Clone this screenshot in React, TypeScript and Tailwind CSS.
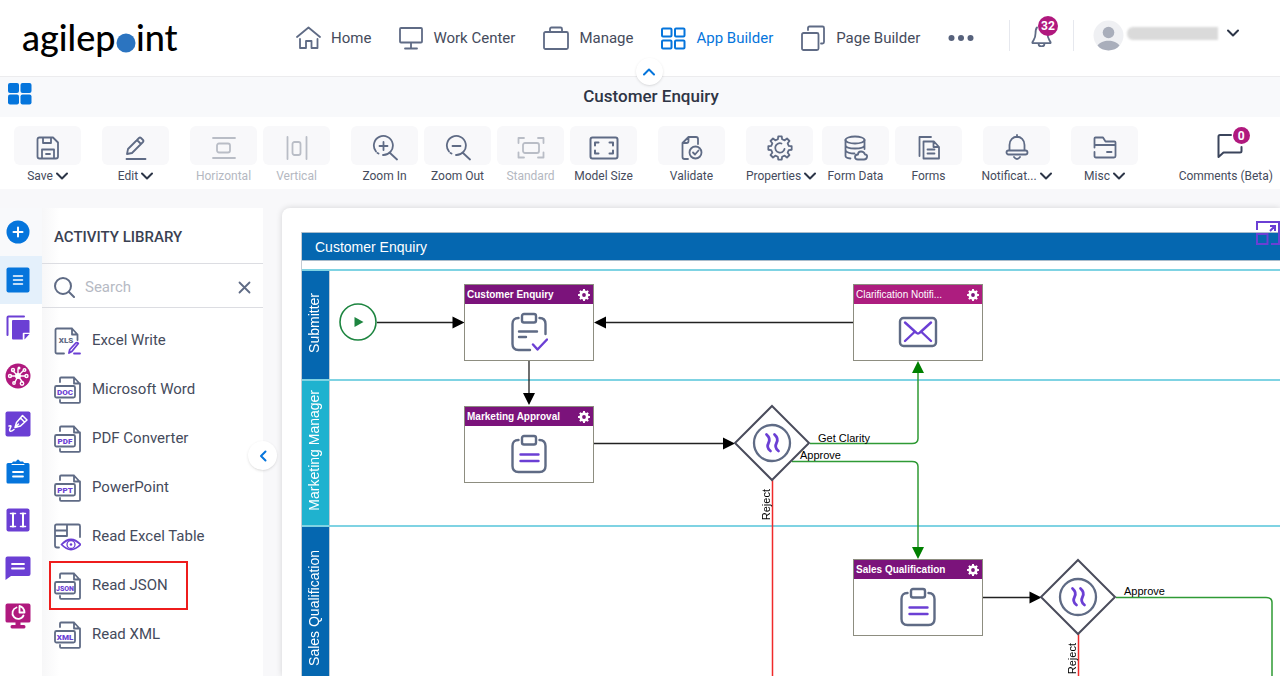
import { useState } from 'react';
import type { ReactNode } from 'react';
import clsx from 'clsx';

const SLATE = '#5f6b85';
const BLUE = '#0575dc';
const PURPLE = '#6b3fd4';

// scalloped outline of a cog, centred on (c, c)
function gearPath(teeth: number, outer: number, inner: number, c: number) {
    const step = (Math.PI * 2) / teeth;
    const pts: string[] = [];
    for (let i = 0; i < teeth; i++) {
        const a = i * step - Math.PI / 2;
        [
            [-0.3, inner],
            [-0.19, outer],
            [0.19, outer],
            [0.3, inner],
        ].forEach(([o, r]) => {
            const t = a + o * step;
            pts.push(`${(c + r * Math.cos(t)).toFixed(2)} ${(c + r * Math.sin(t)).toFixed(2)}`);
        });
    }
    return `M${pts.join('L')}Z`;
}

type IconProps = { w: number; h: number; color?: string; sw?: number; className?: string; children: ReactNode };

function Icon({ w, h, color = SLATE, sw = 2, className, children }: IconProps) {
    return (
        <svg
            width={w}
            height={h}
            viewBox={`0 0 ${w} ${h}`}
            fill="none"
            stroke={color}
            strokeWidth={sw}
            strokeLinecap="round"
            strokeLinejoin="round"
            className={clsx('shrink-0', className)}
            aria-hidden="true"
        >
            {children}
        </svg>
    );
}

function Chevron({ className }: { className?: string }) {
    return (
        <Icon w={12} h={8} color="#2c3547" className={className}>
            <path d="M1 1.500 6 6.500l5-5" />
        </Icon>
    );
}

const NAV = [
    {
        label: 'Home',
        icon: (
            <Icon w={25} h={24} sw={1.8}>
                <path d="M1 11 12.500 1.500 24 11M4 13v9h6v-7h5.500v7H21.500v-9" />
            </Icon>
        ),
    },
    {
        label: 'Work Center',
        icon: (
            <Icon w={24} h={24} sw={1.8}>
                <rect x="1" y="2" width="22" height="14.500" rx="1" />
                <path d="M12 17v5M6 22.500h12" />
            </Icon>
        ),
    },
    {
        label: 'Manage',
        icon: (
            <Icon w={26} h={24} sw={1.8}>
                <rect x="1" y="6" width="24" height="17" rx="1.500" />
                <path d="M7 5.500V3q0-1.500 1.500-1.500h9Q19 1.500 19 3v2.500" />
            </Icon>
        ),
    },
    {
        label: 'App Builder',
        active: true,
        icon: (
            <Icon w={25} h={24} color={BLUE} sw={2}>
                <rect x="1" y="2.500" width="9.500" height="8" rx="1" />
                <rect x="14" y="2.500" width="9.500" height="8" rx="1" />
                <rect x="1" y="14.500" width="9.500" height="8" rx="1" />
                <rect x="14" y="14.500" width="9.500" height="8" rx="1" />
            </Icon>
        ),
    },
    {
        label: 'Page Builder',
        icon: (
            <Icon w={25} h={26} sw={1.8}>
                <rect x="1" y="8" width="16.500" height="17" rx="1.500" />
                <path d="M7 5V3q0-1.500 1.500-1.500h13Q23 1.500 23 3v14q0 1.500-1.500 1.500H20" />
            </Icon>
        ),
    },
];

function Header() {
    return (
        <header className="flex h-[77px] shrink-0 items-center border-b border-[#ececee] bg-white pr-10">
            <a href="#" aria-label="agilepoint" className="w-[296px] shrink-0 pb-[2px] pl-[22px] font-[Lato,sans-serif] text-[36px] leading-10 font-medium text-black">
                agilep
                <span className="relative text-transparent">
                    o
                    <svg viewBox="0 0 20 20" className="absolute bottom-[6px] left-px size-5" aria-hidden="true">
                        <circle cx="10" cy="10" r="9.500" fill="#2b74c0" />
                    </svg>
                </span>
                int
            </a>
            <nav className="flex items-center gap-7">
                {NAV.map((n) => (
                    <a
                        key={n.label}
                        href="#"
                        className={clsx(
                            'flex items-center gap-[10px] text-[15px] whitespace-nowrap',
                            n.active ? 'text-[#0575dc]' : 'text-[#454b5c]',
                        )}
                    >
                        {n.icon}
                        {n.label}
                    </a>
                ))}
                <button aria-label="More">
                    <svg width="26" height="8" viewBox="0 0 26 8" fill="#57627c" aria-hidden="true">
                        <circle cx="3.500" cy="4" r="3" />
                        <circle cx="13" cy="4" r="3" />
                        <circle cx="22.500" cy="4" r="3" />
                    </svg>
                </button>
            </nav>
            <div className="ml-auto flex items-center pb-[5px]">
                <button aria-label="Notifications" className="relative border-x border-[#e6e8ee] px-[21px] py-1">
                    <Icon w={21} h={23} sw={1.8}>
                        <path d="M6 3.500C4.500 5 4.500 7 4.500 9.500 4.500 14 3.500 14.500 1.500 18q-.5 1.200.8 1.200h16.400q1.300 0 .8-1.200c-2-3.500-3-4-3-8.500M7.500 19.500c0 4 6 4 6 0" />
                    </Icon>
                    <span className="absolute -top-1 left-7 flex size-5 items-center justify-center rounded-full bg-[#b0197e] text-xs font-bold text-white">
                        32
                    </span>
                </button>
                <button aria-label="Account" className="flex items-center pl-[19px]">
                    <svg width="31" height="31" viewBox="0 0 31 31" aria-hidden="true">
                        <circle cx="15.500" cy="15.500" r="15" fill="#eff0f3" />
                        <circle cx="15.500" cy="12.500" r="5.800" fill="#a9aebb" />
                        <path d="M4.500 25.500c4-6.500 18-6.500 22 0-5 6.500-17 6.500-22 0Z" fill="#a9aebb" />
                    </svg>
                    <span className="mb-1 ml-[3px] h-[13px] w-[91px] rounded-l-md bg-[#dadada] blur-[1px]" />
                    <Icon w={14} h={9} color="#2c3547" className="mb-1 ml-2">
                        <path d="M2 1.500 7 6.500l5-5" />
                    </Icon>
                </button>
            </div>
        </header>
    );
}

function TitleBar() {
    return (
        <div className="relative flex h-10 shrink-0 items-center justify-center bg-[#f8f9fb] pl-[22px]">
            <button aria-label="Dashboard" className="absolute top-[6px] left-2">
                <svg width="24" height="22" viewBox="0 0 24 22" fill={BLUE} aria-hidden="true">
                    <rect width="11" height="10" rx="2" />
                    <rect x="12.500" width="11" height="10" rx="2" />
                    <rect y="11.500" width="11" height="10" rx="2" />
                    <rect x="12.500" y="11.500" width="11" height="10" rx="2" />
                </svg>
            </button>
            <h1 className="text-[17px] font-medium text-[#2f3545]">Customer Enquiry</h1>
            <div className="absolute inset-x-0 -top-[19px] flex justify-center pl-[18px]">
                <button aria-label="Collapse header" className="flex size-[27px] items-center justify-center rounded-full bg-white shadow">
                    <Icon w={12} h={8} color={BLUE}>
                        <path d="M1 6.500 6 1.500l5 5" />
                    </Icon>
                </button>
            </div>
        </div>
    );
}

type Tool = { label: string; menu?: boolean; disabled?: boolean; wide?: boolean; icon: ReactNode };

const MUTED = '#b9bdc6';

const TOOLS: Tool[][] = [
    [
        {
            label: 'Save',
            menu: true,
            icon: (
                <Icon w={24} h={24} sw={1.8}>
                    <path d="M1.500 3.500q0-2 2-2H17l5 5V20.500q0 2-2 2H3.500q-2 0-2-2ZM7 1.500v5.500h8V1.500M6 22V13.500h12V22M10 18h4" />
                </Icon>
            ),
        },
    ],
    [
        {
            label: 'Edit',
            menu: true,
            icon: (
                <Icon w={24} h={24} sw={1.8}>
                    <path d="M2.500 23h19M3 18l1-5L15 2q1-1 2 0l2 2q1 1 0 2L8 17ZM13 4l4 4" />
                </Icon>
            ),
        },
    ],
    [
        {
            label: 'Horizontal',
            disabled: true,
            icon: (
                <Icon w={24} h={24} color={MUTED} sw={1.8}>
                    <path d="M1 2h22M1 22h22" />
                    <rect x="5" y="7.500" width="13" height="9" rx="2" />
                </Icon>
            ),
        },
        {
            label: 'Vertical',
            disabled: true,
            icon: (
                <Icon w={22} h={24} color={MUTED} sw={1.8}>
                    <path d="M1.500 1v22M20.500 1v22" />
                    <rect x="6.500" y="6" width="8" height="13" rx="2" />
                </Icon>
            ),
        },
    ],
    [
        {
            label: 'Zoom In',
            icon: (
                <Icon w={26} h={26} sw={1.8}>
                    <path d="M4 16.500a9.500 9.500 0 1 1 7 3.500M18 18l7 6.500M11.500 7v8M7.500 11h8M5.500 18l1 .5" />
                </Icon>
            ),
        },
        {
            label: 'Zoom Out',
            icon: (
                <Icon w={26} h={26} sw={1.8}>
                    <path d="M4 16.500a9.500 9.500 0 1 1 7 3.500M18 18l7 6.500M7.500 11h8M5.500 18l1 .5" />
                </Icon>
            ),
        },
        {
            label: 'Standard',
            disabled: true,
            icon: (
                <Icon w={28} h={24} color={MUTED} sw={1.8}>
                    <path d="M1.500 7V2H7M21 2h5.500v5M1.500 16.500v5H7M21 21.500h5.500v-5" />
                    <rect x="6" y="7" width="16" height="10" rx="2" />
                </Icon>
            ),
        },
        {
            label: 'Model Size',
            icon: (
                <Icon w={30} h={24} sw={2}>
                    <rect x="1.500" y="1.500" width="27" height="21" rx="2" />
                    <path d="M6 9.500V6.500h3.500M20.500 6.500H24v3M6 14.500v3h3.500M20.500 17.500H24v-3" />
                </Icon>
            ),
        },
    ],
    [
        {
            label: 'Validate',
            icon: (
                <Icon w={22} h={26} sw={1.8}>
                    <path d="M7 24H3.500Q1.500 24 1.500 22V8l6-6H15q2 0 2 2v5M1.500 8H5.500q2 0 2-2V2" />
                    <circle cx="14.500" cy="17.500" r="6" />
                    <path d="m12 17.500 2 2 3.500-4" />
                </Icon>
            ),
        },
    ],
    [
        {
            label: 'Properties',
            menu: true,
            wide: true,
            icon: (
                <Icon w={26} h={26} sw={1.8}>
                    <path d={gearPath(8, 11.8, 9, 13)} />
                    <path d="M17.500 14a4.700 4.700 0 1 1-3-5.500" />
                </Icon>
            ),
        },
        {
            label: 'Form Data',
            icon: (
                <Icon w={24} h={26} sw={1.8}>
                    <ellipse cx="11" cy="5" rx="9.500" ry="3.500" />
                    <path d="M1.500 5v16q0 2 5 2.500M20.500 5v9M1.500 10.500c1 4 18 4 19 0M1.500 15.500q2 3 9 3" />
                    <path d="M14 24.500q-3 0-3-2.500t3-2.500q0-3 3-3t4 3q2.500 0 2 2.500t-3 2.500Z" />
                </Icon>
            ),
        },
        {
            label: 'Forms',
            icon: (
                <Icon w={22} h={25} sw={1.8}>
                    <path d="M1.500 21V2H13M5.500 6.500H16l5 5.500v11.500H5.500ZM15.500 6.500V12H21M9.500 14.500h7M9.500 18.500h7" />
                </Icon>
            ),
        },
    ],
    [
        {
            label: 'Notificat...',
            menu: true,
            icon: (
                <Icon w={24} h={27} sw={1.8}>
                    <path d="M12 1v2M4.500 16V11C4.500 0 19.500 0 19.500 11v5M9 23q3 4 6 0" />
                    <rect x="1.500" y="16.500" width="21" height="4" rx="2" />
                </Icon>
            ),
        },
    ],
    [
        {
            label: 'Misc',
            menu: true,
            icon: (
                <Icon w={24} h={23} sw={1.8}>
                    <path d="M1.500 11.500V2.500Q1.500 1.500 2.500 1.500H10l2.500 4H21.500q1 0 1 1V20q0 1.500-1.500 1.500H3Q1.500 21.500 1.500 20v-4M1.500 9h21M14 16h4.500" />
                </Icon>
            ),
        },
    ],
];

function Toolbar() {
    return (
        <div className="flex h-[72px] shrink-0 items-start bg-white pt-[9px] pr-[7px] pl-[14px]">
            <div className="flex gap-[21px]">
                {TOOLS.map((group, i) => (
                    <div key={i} className="flex gap-[6px]">
                        {group.map((t) => (
                            <button
                                key={t.label}
                                disabled={t.disabled}
                                className={clsx(
                                    'flex flex-col text-xs whitespace-nowrap',
                                    t.wide ? 'w-[70px]' : 'w-[67px]',
                                    t.disabled ? 'text-[#b4b8c1]' : 'text-[#454b5c]',
                                )}
                            >
                                <span className="flex h-[39px] w-[67px] items-center justify-center rounded-md bg-[#f8f8fa] pt-1">{t.icon}</span>
                                <span className="flex h-[22px] items-center justify-center gap-[3px] self-center">
                                    {t.label}
                                    {t.menu && <Chevron />}
                                </span>
                            </button>
                        ))}
                    </div>
                ))}
            </div>
            <button className="ml-auto flex flex-col items-center text-xs whitespace-nowrap text-[#454b5c]">
                <span className="relative flex h-[39px] w-12 items-center justify-center pl-2">
                    <Icon w={26} h={26} color="#3b455c">
                        <path d="M14 2H3Q1.500 2 1.500 3.500V24l5-4.500H23q1.500 0 1.500-1.500v-4" />
                    </Icon>
                    <span className="absolute top-px right-0 flex size-[17px] items-center justify-center rounded-full bg-[#b0197e] font-bold text-white">
                        0
                    </span>
                </span>
                <span className="flex h-[22px] items-center">Comments (Beta)</span>
            </button>
        </div>
    );
}

const RAIL = [
    {
        label: 'Add',
        icon: (
            <Icon w={24} h={24} color="#fff">
                <circle cx="12" cy="12" r="11.500" fill={BLUE} stroke="none" />
                <path d="M12 7.500v9M7.500 12h9" />
            </Icon>
        ),
    },
    {
        label: 'Activity Library',
        icon: (
            <Icon w={24} h={26} color="#fff" sw={1.5}>
                <rect x="0.500" y="0.500" width="23" height="25" rx="2" fill={BLUE} stroke="none" />
                <path d="M7.500 9h9M7.500 13h9M7.500 17h9" />
            </Icon>
        ),
    },
    {
        label: 'Pages',
        icon: (
            <Icon w={24} h={26} color={PURPLE}>
                <path d="M1.500 20V2.500q0-1 1-1H18" />
                <path d="M6 6q0-1 1-1h15.500q1 0 1 1v12L17 24.500H7q-1 0-1-1Z" fill={PURPLE} stroke="none" />
                <path d="M17.500 24.500v-6h6" fill="#fff" stroke="#fff" strokeWidth="1.500" />
                <path d="m18.500 24.500 5-5.500h-5Z" fill={PURPLE} stroke="none" />
            </Icon>
        ),
    },
    {
        label: 'Connectors',
        icon: (
            <Icon w={26} h={26} color="#fff" sw={1.4}>
                <circle cx="13" cy="13" r="12.500" fill="#b0197e" stroke="none" />
                <path d="M13 13V6M13 13l5-5M13 13h7M13 13l4.500 6M13 13l-3 6M13 13H6M13 13 8 8" />
                <circle cx="13" cy="13" r="3" fill="#fff" stroke="none" />
                <circle cx="14" cy="5" r="1.500" fill="#fff" stroke="none" />
                <circle cx="19.500" cy="7" r="1.300" />
                <circle cx="21.500" cy="13" r="1.500" />
                <circle cx="17" cy="20.500" r="1.700" />
                <circle cx="9" cy="20" r="1.200" />
                <circle cx="5" cy="13" r="1.500" />
                <circle cx="8" cy="7" r="1.500" />
            </Icon>
        ),
    },
    {
        label: 'Signature',
        icon: (
            <Icon w={26} h={26} color="#fff" sw={1.5}>
                <rect x="0.500" y="0.500" width="25" height="25" rx="2" fill={PURPLE} stroke="none" />
                <path d="m10 16.500 1.500-5L17.500 4.500l4.500 4.500-6.500 6ZM15.500 7l4 4M10 16.500l3.500-3.500M4 15q3-1 1.500 1.500T5 20t4-1.500" />
            </Icon>
        ),
    },
    {
        label: 'Tasks',
        icon: (
            <Icon w={24} h={26} color="#fff" sw={1.8}>
                <path d="M2 4h4l1-1.500h3q2-4 4 0h3L18 4h4q1.500 0 1.500 1.500V23q0 1.500-1.500 1.500H2Q.5 24.500.5 23V5.500Q.5 4 2 4Z" fill={BLUE} stroke="none" />
                <path d="M6 5.500h12" strokeWidth="1" />
                <path d="M7 13h10M7 17.500h10" />
            </Icon>
        ),
    },
    {
        label: 'Data',
        icon: (
            <Icon w={24} h={24} color="#fff">
                <rect x="0.500" y="0.500" width="23" height="23" rx="2" fill={PURPLE} stroke="none" />
                <path d="M7 5.500v13M17 5.500v13" />
                <path d="M4.500 5.500h5M4.500 18.500h5M14.500 5.500h5M14.500 18.500h5" strokeWidth="1.500" />
            </Icon>
        ),
    },
    {
        label: 'Messages',
        icon: (
            <Icon w={26} h={26} color="#fff" sw={1.8}>
                <path d="M2.500 1.500h21q2 0 2 2V19q0 2-2 2H6l-5.500 4V3.500q0-2 2-2Z" fill={PURPLE} stroke="none" />
                <path d="M7 9h12M7 13.500h12" />
            </Icon>
        ),
    },
    {
        label: 'Reports',
        icon: (
            <Icon w={26} h={26} color="#fff" sw={1.8}>
                <path d="M2.500.5h21q2 0 2 2V18q0 1.500-2 1.500h-8V22H19q1.500 0 1.500 1.800t-1.500 1.700H7q-1.500 0-1.500-1.700T7 22h3.500v-2.500h-8Q.5 19.500.5 18V2.500q0-2 2-2Z" fill="#b0197e" stroke="none" />
                <path d="M11.500 4.500a5.800 5.800 0 1 0 7 8M14.500 3v6.500h5Q19 4 14.500 3Z" />
            </Icon>
        ),
    },
];

function Rail() {
    const [active, setActive] = useState(1);
    return (
        <nav className="flex w-[42px] shrink-0 flex-col bg-white">
            {RAIL.map((r, i) => (
                <button
                    key={r.label}
                    aria-label={r.label}
                    onClick={() => setActive(i)}
                    className={clsx(
                        'flex h-12 shrink-0 items-center justify-center pr-[6px]',
                        i === active ? 'bg-[#e4f0fb]' : i === 0 ? 'bg-[#f8f9fb]' : 'bg-white',
                    )}
                >
                    {r.icon}
                </button>
            ))}
        </nav>
    );
}

function FileIcon({ tag }: { tag: string }) {
    return (
        <Icon w={27} h={28} sw={1.8}>
            <path d="M6 6V2.500q0-1 1-1H20l6 6.500V26q0 .8-1 .8H7q-1 0-1-1V24M20 1.500V7.500h6" />
            <rect x="1" y="10" width="20" height="11.500" rx="1.500" fill="#fff" />
            <text
                x="11"
                y="18.500"
                textAnchor="middle"
                fill={PURPLE}
                stroke="none"
                className={clsx('font-[Roboto,sans-serif] font-black', tag.length > 3 ? 'text-[7px]' : 'text-[8px]')}
            >
                {tag}
            </text>
        </Icon>
    );
}

const ACTIVITIES = [
    {
        label: 'Excel Write',
        icon: (
            <Icon w={27} h={28} sw={1.8}>
                <path d="M10 26.500H3q-1.500 0-1.500-1.500V3Q1.500 1.500 3 1.500H18l5.500 6V13M18 1.500V7.500h5.500" />
                <text x="12" y="15.500" textAnchor="middle" fill={SLATE} stroke="none" className="font-[Roboto,sans-serif] text-[8px] font-black">
                    XLS
                </text>
                <path d="M20 26.500h6M15 26l.8-3.500 6-6.500q1.500-1 2.500.5l-6.500 8Z" stroke={PURPLE} />
            </Icon>
        ),
    },
    { label: 'Microsoft Word', icon: <FileIcon tag="DOC" /> },
    { label: 'PDF Converter', icon: <FileIcon tag="PDF" /> },
    { label: 'PowerPoint', icon: <FileIcon tag="PPT" /> },
    {
        label: 'Read Excel Table',
        icon: (
            <Icon w={27} h={28} sw={1.8}>
                <path d="M5 24.500H3q-2 0-2-2V3Q1 1.500 2.500 1.500H24.500Q26 1.500 26 3V14M1 7.500h12M1 13h12M13 1.500V13" />
                <path d="M7.500 21.500q9.500-10 19 0-9.500 10-19 0Z" stroke={PURPLE} />
                <circle cx="17" cy="21.500" r="4" stroke={PURPLE} strokeWidth="1.300" />
                <circle cx="17" cy="21.500" r="1.300" fill={PURPLE} stroke="none" />
            </Icon>
        ),
    },
    { label: 'Read JSON', icon: <FileIcon tag="JSON" />, marked: true },
    { label: 'Read XML', icon: <FileIcon tag="XML" /> },
];

function Library() {
    const [query, setQuery] = useState('');
    const items = ACTIVITIES.filter((a) => a.label.toLowerCase().includes(query.toLowerCase()));

    return (
        <aside className="relative flex w-[221px] shrink-0 flex-col bg-white bg-linear-to-r from-[#f7f7f8] to-white to-8%">
            <h2 className="flex h-14 shrink-0 items-center border-b border-[#dcdde2] pt-[3px] pl-3 text-[15px] font-medium text-[#3a4152]">
                ACTIVITY LIBRARY
            </h2>
            <div className="flex h-11 shrink-0 items-center border-b border-[#dcdde2] px-3 pt-1">
                <label htmlFor="activity-search">
                    <Icon w={21} h={21}>
                        <circle cx="9" cy="9" r="8" />
                        <path d="m15 15 5 5" />
                    </Icon>
                </label>
                <input
                    id="activity-search"
                    type="text"
                    aria-label="Search activities"
                    placeholder="Search"
                    value={query}
                    onChange={(e) => setQuery(e.target.value)}
                    className="ml-[10px] w-full min-w-0 bg-transparent text-[15px] outline-none placeholder:text-[#b6bac4]"
                />
                <button aria-label="Clear search" onClick={() => setQuery('')}>
                    <Icon w={13} h={13} sw={1.8}>
                        <path d="m1.500 1.500 10 10M11.500 1.500l-10 10" />
                    </Icon>
                </button>
            </div>
            <ul className="pt-2 pl-[7px]">
                {items.map((a) => (
                    <li key={a.label}>
                        <button
                            className={clsx(
                                'flex h-[49px] items-center gap-[11px] border-2 pr-[18px] pl-[3px] text-[15px] whitespace-nowrap text-[#454b5c]',
                                a.marked ? 'border-[#ee1c1c]' : 'border-transparent',
                            )}
                        >
                            {a.icon}
                            {a.label}
                        </button>
                    </li>
                ))}
            </ul>
            <button
                aria-label="Collapse library"
                className="absolute top-[233px] -right-[14px] z-10 flex size-[29px] items-center justify-center rounded-full bg-white shadow"
            >
                <Icon w={8} h={12} color={BLUE}>
                    <path d="M6.500 1.500 2 6l4.500 4.500" />
                </Icon>
            </button>
        </aside>
    );
}

const CLIPBOARD = (
    <Icon w={38} h={40} sw={2.4}>
        <rect x="12" y="2" width="14" height="8.500" rx="2" />
        <path d="M8.500 6q-6 0-6 6v20q0 6 6 6h21q6 0 6-6V12q0-6-6-6" />
        <path d="M10.500 20.500h18M10.500 27h18" stroke={PURPLE} />
    </Icon>
);

const NODES = [
    {
        title: 'Customer Enquiry',
        pos: 'left-[182px] top-[76px]',
        head: 'bg-[#7b137b] font-bold',
        icon: (
            <Icon w={38} h={40} sw={2.4}>
                <rect x="12" y="2" width="14" height="8.500" rx="2" />
                <path d="M8.500 6q-6 0-6 6v20q0 6 6 6H20M29.500 6q6 0 6 6v10" />
                <path d="M9 19.500h18M9 25h7" />
                <path d="m23 32.500 4.500 5L37 27.500" stroke={PURPLE} />
            </Icon>
        ),
    },
    {
        title: 'Clarification Notifi...',
        pos: 'left-[571px] top-[76px]',
        head: 'bg-[#ad1d7f]',
        icon: (
            <Icon w={40} h={32} sw={2.4}>
                <rect x="2" y="2" width="36" height="28" rx="3.500" />
                <path d="m7 6.500 11 10q2 2 4 0l11-10M7 25l9.500-9M33 25l-9.500-9" stroke={PURPLE} />
            </Icon>
        ),
    },
    { title: 'Marketing Approval', pos: 'left-[182px] top-[198px]', head: 'bg-[#7b137b] font-bold', icon: CLIPBOARD },
    { title: 'Sales Qualification', pos: 'left-[571px] top-[351px]', head: 'bg-[#7b137b] font-bold', icon: CLIPBOARD },
];

const LANES = [
    { name: 'Submitter', height: 'h-[110px]', color: 'bg-[#0567b0]' },
    { name: 'Marketing Manager', height: 'h-[146px]', color: 'bg-[#1fb2cf]' },
    { name: 'Sales Qualification', height: 'h-[168px]', color: 'bg-[#0567b0]' },
];

const EDGE_LABELS = [
    { text: 'Get Clarity', className: 'left-[536px] top-[224px]' },
    { text: 'Approve', className: 'left-[518px] top-[241px]' },
    { text: 'Approve', className: 'left-[842px] top-[377px]' },
    { text: 'Reject', className: 'left-[478px] top-[281px] rotate-180 [writing-mode:vertical-rl]' },
    { text: 'Reject', className: 'left-[784px] top-[435px] rotate-180 [writing-mode:vertical-rl]' },
];

function Gateway({ x, y }: { x: number; y: number }) {
    return (
        <g transform={`translate(${x} ${y})`} strokeWidth="2">
            <path d="M0-37 37 0 0 37-37 0Z" fill="#fff" stroke="#4a4c5c" />
            <circle r="18" stroke={SLATE} strokeWidth="2.300" />
            <path d="M-5.500-8.500q4.500 4 2 8.500t2 8M2.500-8.500q4.500 4 2 8.500t2 8" stroke={PURPLE} strokeWidth="2.800" strokeLinecap="round" />
        </g>
    );
}

function Connectors() {
    return (
        <svg className="absolute inset-0 h-full w-full" fill="none" strokeWidth="1.300" aria-hidden="true">
            <g stroke="#222">
                <path d="M95 114.500h76M247 153v35M571 114.500H323M312 235.500h130M701 389.500h47" />
            </g>
            <g fill="#000">
                <path d="m182.500 114.500-12-6v12ZM247 197l-6-12h12ZM312 114.500l12-6v12ZM453 235.500l-12-6v12ZM759.500 389.500l-12-6v12Z" />
            </g>
            <g stroke="#2f9a35" strokeWidth="1.500">
                <path d="M528 235.500h102q6 0 6-5V163M510 253.500h120q6 0 6 5V341M834 389.500h150q6 0 6 5V900" />
            </g>
            <path d="m636 153-6 12h12ZM636 351l-6-12h12Z" fill="#008000" />
            <path d="M490.500 272v640M796.500 426v480" stroke="#f02a2a" strokeWidth="1.500" />
            <circle cx="76" cy="114" r="18" fill="#fff" stroke="#1d8540" strokeWidth="1.600" />
            <path d="M72.500 109v10l9-5Z" fill="#1d8540" />
            <Gateway x={490} y={235} />
            <Gateway x={796} y={389} />
        </svg>
    );
}

function Canvas() {
    return (
        <main className="relative min-w-0 flex-1 overflow-hidden rounded-tl-lg bg-white pt-6 pl-[19px] font-['Liberation_Sans',Arial,sans-serif] shadow-[0_0_6px_rgba(0,0,0,0.15)]">
            <div className="border-l border-[#c3ccd4]">
                <h2 className="flex h-[29px] items-center border-y border-[#a9bccb] bg-[#0567b0] pl-[13px] text-sm text-white">
                    Customer Enquiry
                </h2>
                <div className="pt-2">
                    {LANES.map((l) => (
                        <section key={l.name} className={clsx('flex border-t-2 border-[#7fd3e3]', l.height)}>
                            <h3 className={clsx('flex w-7 items-center justify-center border-r border-[#c3ccd4] pr-[3px] pb-[5px] text-sm text-white', l.color)}>
                                <span className="rotate-180 whitespace-nowrap [writing-mode:vertical-rl]">{l.name}</span>
                            </h3>
                        </section>
                    ))}
                </div>
            </div>

            <Connectors />

            {NODES.map((n) => (
                <article key={n.title} className={clsx('absolute flex h-[77px] w-[130px] flex-col border border-[#8d8d80] bg-white', n.pos)}>
                    <h4 className={clsx('flex h-[19px] items-center justify-between pr-[3px] pl-[2px] text-[10px] text-white', n.head)}>
                        {n.title}
                        <button aria-label={`${n.title} settings`}>
                            <svg width="12" height="12" viewBox="0 0 12 12" aria-hidden="true">
                                <path d={gearPath(8, 6, 4.6, 6)} fill="#fff" />
                                <circle cx="6" cy="6" r="1.900" fill="#7b137b" />
                            </svg>
                        </button>
                    </h4>
                    <div className="flex flex-1 items-center justify-center">{n.icon}</div>
                </article>
            ))}

            {EDGE_LABELS.map((e, i) => (
                <span key={i} className={clsx('absolute text-[11px] leading-3 whitespace-nowrap text-black', e.className)}>
                    {e.text}
                </span>
            ))}

            <button aria-label="Expand canvas" className="absolute top-3 right-0">
                <Icon w={24} h={26} color={PURPLE}>
                    <path d="M1 10V2h22v22h-8M14 11l5-5M14 6h5v5M1 14h10.500v10H1Z" strokeLinecap="butt" strokeLinejoin="miter" />
                </Icon>
            </button>
        </main>
    );
}

export default function App() {
    return (
        <div className="flex h-screen flex-col overflow-hidden bg-[#f8f8fa] font-[Roboto,sans-serif]">
            <Header />
            <TitleBar />
            <Toolbar />
            <div className="flex min-h-0 flex-1 pt-[19px]">
                <Rail />
                <Library />
                <div className="flex min-w-0 flex-1 pl-[19px]">
                    <Canvas />
                </div>
            </div>
        </div>
    );
}
